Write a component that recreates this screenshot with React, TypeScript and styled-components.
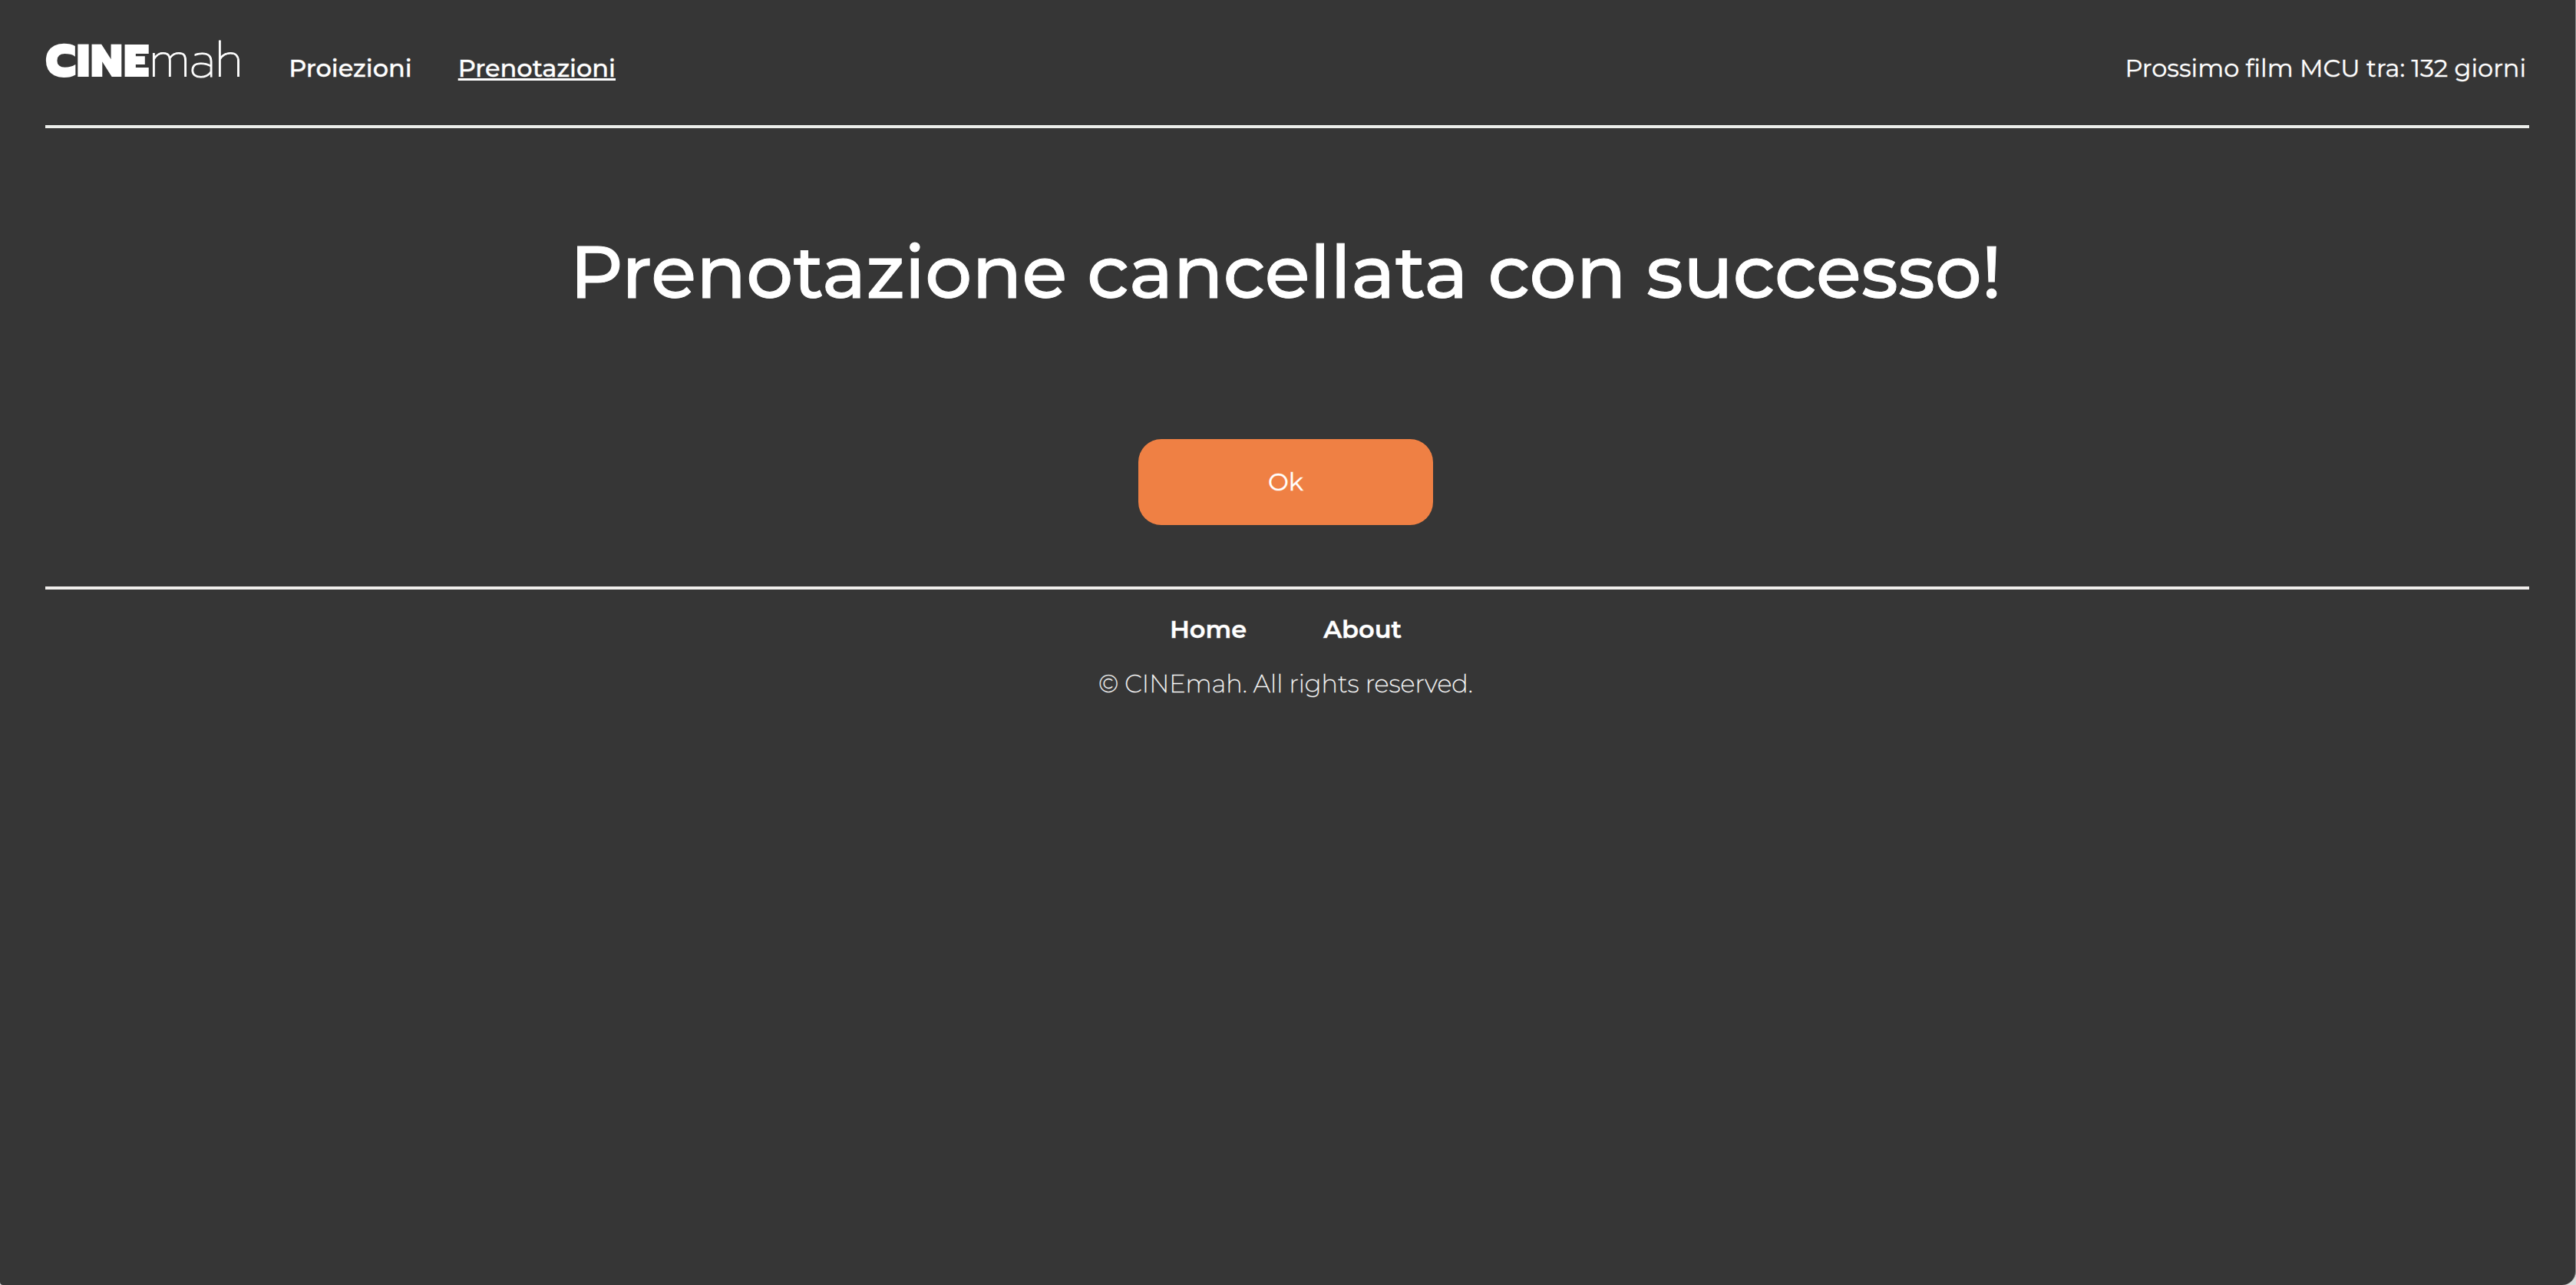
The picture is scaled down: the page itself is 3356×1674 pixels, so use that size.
import React from "react";
import styled, { createGlobalStyle } from "styled-components";

const GlobalStyle = createGlobalStyle`
  html {
    background: #dcdcdc;
  }
  body {
    margin: 0;
    color: #fff;
    font-family: Montserrat, Inter, sans-serif;
    font-size: 32px;
    line-height: 40px;
    -webkit-text-stroke: 1px rgba(255, 255, 255, 0.45);
  }
`;

const Page = styled.div`
  box-sizing: border-box;
  min-height: 100vh;
  padding: 0 60px 0 59px;
  background: #363636;
  border-right: 1px solid #8c8c8c;
  border-radius: 0 0 18px 4px;
`;

const Header = styled.header`
  display: flex;
  align-items: baseline;
  justify-content: space-between;
  padding: 43px 4px 47px 0;
  border-bottom: 4px solid #eceeeb;
`;

const HeaderNav = styled.nav`
  display: flex;
  align-items: baseline;
  gap: 60px;
`;

const Logo = styled.a`
  color: inherit;
  font-family: Prompt, Inter, sans-serif;
  font-size: 62px;
  line-height: 72px;
  font-weight: 200;
  text-decoration: none;
  -webkit-text-stroke: 1px #fff;
`;

const LogoStrong = styled.span`
  font-size: 60px;
  font-weight: 900;
  -webkit-text-stroke: 0;
`;

const NavLink = styled.a<{ $active?: boolean; $strong?: boolean }>`
  color: inherit;
  font-weight: ${({ $strong }) => ($strong ? 600 : 500)};
  text-decoration: ${({ $active }) => ($active ? "underline" : "none")};
  text-decoration-color: #fff;
  text-decoration-thickness: 3px;
  text-underline-offset: 2px;
  text-decoration-skip-ink: none;
`;

const Countdown = styled.p`
  margin: 0;
  font-weight: 400;
`;

const Main = styled.main`
  display: flex;
  flex-direction: column;
  align-items: center;
  padding: 127px 4px 80px 0;
`;

const Title = styled.h1`
  margin: 0 0 158px;
  font-size: 96px;
  line-height: 120px;
  font-weight: 500;
  text-align: center;
  -webkit-text-stroke: 1px #fff;
`;

const ConfirmButton = styled.button`
  width: 384px;
  height: 112px;
  padding: 0;
  border: 0;
  border-radius: 30px;
  background: #ef8044;
  color: inherit;
  font: inherit;
  cursor: pointer;
`;

const Footer = styled.footer`
  display: flex;
  flex-direction: column;
  align-items: center;
  gap: 31px;
  padding: 32px 4px 0 0;
  border-top: 4px solid #f0eeec;
`;

const FooterNav = styled.nav`
  display: flex;
  gap: 100px;
`;

const Copyright = styled.p`
  margin: 0;
  font-weight: 200;
`;

export default function App() {
  return (
    <>
      <GlobalStyle />
      <Page>
        <Header>
          <HeaderNav>
            <Logo href="#home">
              <LogoStrong>CINE</LogoStrong>mah
            </Logo>
            <NavLink href="#proiezioni">Proiezioni</NavLink>
            <NavLink href="#prenotazioni" $active aria-current="page">
              Prenotazioni
            </NavLink>
          </HeaderNav>
          <Countdown>Prossimo film MCU tra: 132 giorni</Countdown>
        </Header>
        <Main>
          <Title>Prenotazione cancellata con successo!</Title>
          <ConfirmButton type="button">Ok</ConfirmButton>
        </Main>
        <Footer>
          <FooterNav>
            <NavLink href="#home" $strong>
              Home
            </NavLink>
            <NavLink href="#about" $strong>
              About
            </NavLink>
          </FooterNav>
          <Copyright>© CINEmah. All rights reserved.</Copyright>
        </Footer>
      </Page>
    </>
  );
}
